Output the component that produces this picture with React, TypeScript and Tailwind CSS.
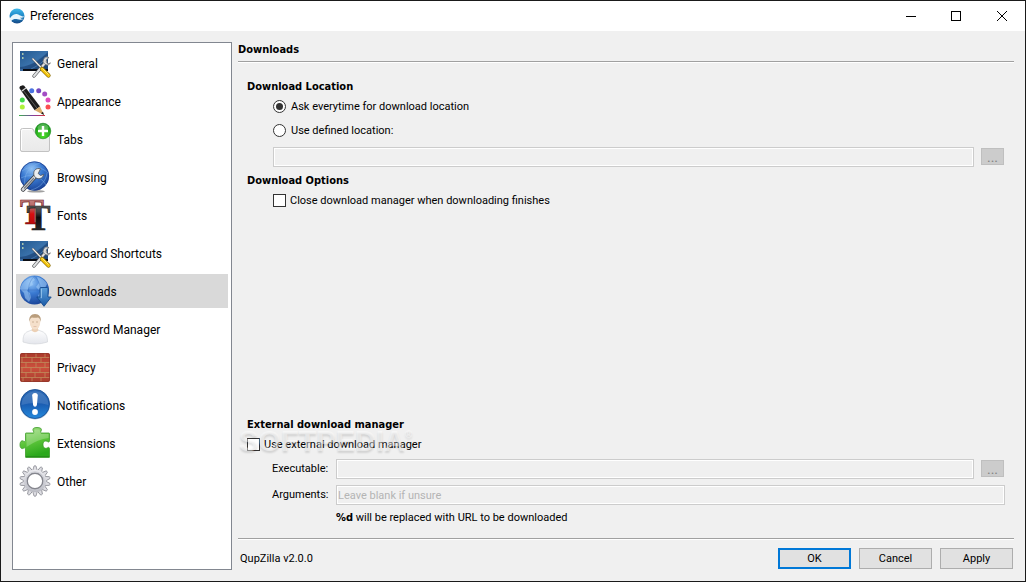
import { useState, type ReactNode } from 'react';

const uiFont = "font-['Roboto','Noto_Sans',sans-serif]";
const boldFont = "font-bold font-['DejaVu_Sans_Condensed','DejaVu_Sans',sans-serif]";

function Svg({ children }: { children: ReactNode }) {
  return (
    <svg viewBox="0 0 32 32" className="w-8 h-8 shrink-0 overflow-visible" fill="none" aria-hidden="true">
      {children}
    </svg>
  );
}

function DesktopIcon() {
  return (
    <Svg>
      <defs>
        <linearGradient id="desk" x1="0" y1="0" x2="1" y2="1">
          <stop offset="0" stopColor="#24598f" />
          <stop offset="0.5" stopColor="#3a72ab" />
          <stop offset="1" stopColor="#173a68" />
        </linearGradient>
      </defs>
      <rect x="1" y="4" width="28" height="20" fill="url(#desk)" />
      <path d="M1 20C12 19 21 13 29 5v17H1z" fill="#1c4577" opacity="0.7" />
      <path d="M12 22c7-3 13-8 17-13" stroke="#5d8fc0" strokeWidth="0.6" />
      <rect x="1" y="22" width="28" height="2" fill="#0a0d14" />
      <rect x="1" y="22" width="3" height="2" fill="#3c6ca0" />
      <path d="M3 7h1.5M3 11h1.5" stroke="#d5e8b4" strokeWidth="1.5" />
      {/* wrench */}
      <path d="M15 29 27 15" stroke="#55585c" strokeWidth="3.4" strokeLinecap="round" />
      <path d="M15 29 27 15" stroke="#dfe1e3" strokeWidth="2" strokeLinecap="round" />
      <path d="M30 10.5a4 4 0 1 0 1.5 5.5l-2.6.8-1.7-1.8.4-2.4z" fill="#d4d6d8" stroke="#606366" strokeWidth="0.7" />
      {/* screwdriver */}
      <path d="m13.500 11.500 10 10.500" stroke="#4c4e50" strokeWidth="2.4" />
      <path d="m13.500 11.500 10 10.500" stroke="#f2f2f2" strokeWidth="1.2" />
      <path d="m23 22 6.500 6.500" stroke="#8d6c00" strokeWidth="4.2" strokeLinecap="round" />
      <path d="m23 22 6.500 6.500" stroke="#f4c60d" strokeWidth="3" strokeLinecap="round" />
      <path d="m23.500 21.500 6 6" stroke="#fff0a0" strokeWidth="0.8" />
    </Svg>
  );
}

function AppearanceIcon() {
  return (
    <Svg>
      <defs>
        <linearGradient id="stroke-line" x1="0" x2="1">
          <stop offset="0" stopColor="#39b54a" />
          <stop offset="0.5" stopColor="#7a3fa5" />
          <stop offset="1" stopColor="#d8323c" />
        </linearGradient>
      </defs>
      <circle cx="12.7" cy="5.7" r="2.5" fill="#4a74e0" />
      <circle cx="19.7" cy="5.7" r="2.5" fill="#7448bf" />
      <circle cx="25.7" cy="9" r="2.5" fill="#a34cc4" />
      <circle cx="29" cy="15" r="2.5" fill="#e04cbc" />
      <circle cx="29" cy="22" r="2.5" fill="#fb4e50" />
      <circle cx="3.3" cy="15" r="2.5" fill="#42d94a" />
      <circle cx="3.3" cy="22" r="2.5" fill="#aef23c" />
      <rect x="0" y="30" width="26" height="1" fill="url(#stroke-line)" />
      <path d="M.3 3 1 1.200 3.800.2 5.200.7 21 21.500l-5.300 3.700z" fill="#1c1c1c" />
      <path d="M4 5 18 23.200" stroke="#5c5c5c" strokeWidth="1" />
      <path d="m2.800 6 4.200-3" stroke="#d6d6d6" strokeWidth="1.2" />
      <path d="m15.700 25.200 5.300-3.700 4 8.500z" fill="#d9ac69" />
      <path d="m22 28.200 2-1.400 1 3.200z" fill="#1b1b1b" />
    </Svg>
  );
}

function TabsIcon() {
  return (
    <Svg>
      <defs>
        <linearGradient id="tab" x1="0" y1="0" x2="0" y2="1">
          <stop offset="0" stopColor="#f3f3f3" />
          <stop offset="1" stopColor="#e9e9e9" />
        </linearGradient>
        <radialGradient id="plus" cx="0.5" cy="0.8" r="0.8">
          <stop offset="0" stopColor="#4fdc2c" />
          <stop offset="1" stopColor="#0d8f14" />
        </radialGradient>
      </defs>
      <path
        d="M1.500 27V7.500q0-2 2-2h9q1.500 0 2 1.500l.6 1.500q.4 1.500 2 1.500H29q1.500 0 1.500 1.500V27q0 1.500-1.500 1.500H3Q1.500 28.500 1.500 27z"
        fill="url(#tab)"
        stroke="#c2c2c2"
      />
      <path d="M2.500 27V8q0-1.500 1.500-1.500h8.500" stroke="#fff" />
      <circle cx="24" cy="8" r="7.8" fill="url(#plus)" stroke="#0d7f12" strokeWidth="0.5" />
      <ellipse cx="24" cy="4.5" rx="5.5" ry="3.5" fill="#fff" opacity="0.25" />
      <path d="M24 3v10M19 8h10" stroke="#fff" strokeWidth="2.4" />
    </Svg>
  );
}

function GlobeBase({ id }: { id: string }) {
  return (
    <>
      <defs>
        <radialGradient id={id} cx="0.4" cy="0.25" r="0.8">
          <stop offset="0" stopColor="#8fc1f5" />
          <stop offset="0.45" stopColor="#3b7bd2" />
          <stop offset="1" stopColor="#173f93" />
        </radialGradient>
      </defs>
      <circle cx="15.5" cy="15" r="14.5" fill={`url(#${id})`} />
    </>
  );
}

function BrowsingIcon() {
  return (
    <Svg>
      <ellipse cx="17" cy="30.3" rx="9" ry="1.2" fill="#777" opacity="0.7" />
      <GlobeBase id="globe-browse" />
      <circle cx="15.5" cy="15" r="14.2" stroke="#1d3f8f" strokeWidth="0.8" />
      <path
        d="M3 10c8-6 19-5 26 2M6 25C4 14 10 5 21 2M2 17c9-5 20-2 25 7M12 29c9-2 15-9 16-17"
        stroke="#83b6ed"
        strokeWidth="0.6"
        opacity="0.8"
      />
      <path d="M4 28.500 17 14.500" stroke="#34373b" strokeWidth="4.4" strokeLinecap="round" />
      <path d="M4 28.500 17 14.500" stroke="#cfd2d6" strokeWidth="3" strokeLinecap="round" />
      <path d="m5.500 27 9-9.500" stroke="#777b80" strokeWidth="1.2" strokeLinecap="round" />
      <path
        d="M21.500 7.800c-4-1.200-7.300 1.500-6.700 5.500.4 3 3.300 5 6.200 4.200 2-.5 3.400-2 3.700-4l-3.200 1-2.300-2z"
        fill="#eceef0"
        stroke="#4c5055"
        strokeWidth="0.8"
      />
    </Svg>
  );
}

function FontsIcon() {
  return (
    <Svg>
      <defs>
        <linearGradient id="red-t" x1="0" y1="0" x2="0" y2="1">
          <stop offset="0" stopColor="#c9a0a0" />
          <stop offset="0.4" stopColor="#b86060" />
          <stop offset="0.55" stopColor="#d80f0f" />
          <stop offset="1" stopColor="#a00808" />
        </linearGradient>
        <linearGradient id="black-t" x1="0" y1="0" x2="0" y2="1">
          <stop offset="0" stopColor="#777" />
          <stop offset="0.35" stopColor="#444" />
          <stop offset="0.5" stopColor="#0c0c0c" />
          <stop offset="1" stopColor="#3a3a3a" />
        </linearGradient>
      </defs>
      <g fontFamily="Liberation Serif, serif" fontWeight="700" fontSize="36" textAnchor="middle">
        <text x="13" y="25" fill="url(#red-t)" stroke="#6c1212" strokeWidth="0.6">T</text>
        <text x="19.5" y="30.5" fill="url(#black-t)" stroke="#1a1a1a" strokeWidth="0.6">T</text>
      </g>
    </Svg>
  );
}

function DownloadsIcon() {
  return (
    <Svg>
      <defs>
        <linearGradient id="arrow" x1="0" y1="0" x2="0" y2="1">
          <stop offset="0" stopColor="#5b9edb" />
          <stop offset="1" stopColor="#1a5ba6" />
        </linearGradient>
      </defs>
      <GlobeBase id="globe-down" />
      <path
        d="M3 9c3-4 7-6.500 11-7l2 3-3 2 1 3-4 2-2 4 3 2 1 5-2 4-4-4-1-5-4-4zM18 2c4 .5 8 3 10 7l-2 4-4-1-2 3-3-3 3-4zM21 17l4-1 3 2-2 5-5 3-2-5z"
        fill="#a9d2f8"
        opacity="0.55"
      />
      <path d="M1 15h29M15.500 1c-8 8-8 20 0 28M15.500 1c8 8 8 20 0 28" stroke="#1e55a6" strokeWidth="0.5" opacity="0.5" />
      <path
        d="M21 13.500q0-1 1-1h6q1 0 1 1V22h3.200L25 31.300 17.800 22H21z"
        fill="url(#arrow)"
        stroke="#134a8e"
        strokeWidth="0.9"
        strokeLinejoin="round"
      />
      <path d="M22.300 13.700v9.500" stroke="#b2d9f7" strokeWidth="0.8" />
    </Svg>
  );
}

function PersonIcon() {
  return (
    <Svg>
      <defs>
        <linearGradient id="shirt" x1="0" y1="0" x2="0" y2="1">
          <stop offset="0" stopColor="#fff" />
          <stop offset="1" stopColor="#e4e6ec" />
        </linearGradient>
      </defs>
      <path
        d="M4 29c0-6 1-9 5-10.500l4-1.500h6l4 1.500c4 1.500 5.500 5 5.500 10.500q-6 2-12.500 2T4 29z"
        fill="url(#shirt)"
        stroke="#d3d5da"
        strokeWidth="0.7"
      />
      <path d="M12.500 17.500q3.500 3.500 7 0L18.500 14h-5z" fill="#ecd0b5" />
      <ellipse cx="16" cy="9.5" rx="5.2" ry="7" fill="#f5e0cb" />
      <path d="M10.500 9C9.500 4 12 1 16 1s6.800 3 5.500 8q-.5-4-2.500-4.500-3 .5-6 0-2 .5-2.500 4.500z" fill="#b99d7c" />
      <path d="M13 9h2m2 0h2" stroke="#b39477" strokeWidth="0.6" />
      <path d="M14.500 13.500h3" stroke="#d3a58d" strokeWidth="0.5" />
    </Svg>
  );
}

function BrickIcon() {
  return (
    <Svg>
      <defs>
        <linearGradient id="bricks" x1="0" y1="0" x2="0" y2="1">
          <stop offset="0" stopColor="#a9392b" />
          <stop offset="0.5" stopColor="#cc503d" />
          <stop offset="1" stopColor="#a93d2e" />
        </linearGradient>
      </defs>
      <rect x="1" y="2" width="30" height="29" rx="2" fill="url(#bricks)" />
      <path
        d="M1 6.500h30M1 11.500h30M1 16.500h30M1 21.500h30M1 26.500h30M7 2v4.500M17 2v4.500M26 2v4.500M3 6.500v5M13 6.500v5M22 6.500v5M7 11.500v5M17 11.500v5M26 11.500v5M3 16.500v5M12 16.500v5M21 16.500v5M7 21.500v5M16 21.500v5M26 21.500v5M4 26.500V31M13 26.500V31M22 26.500V31"
        stroke="#c08c5c"
        strokeWidth="0.8"
      />
      <rect x="1.5" y="2.5" width="29" height="28" rx="2" stroke="#8e3529" opacity="0.7" />
    </Svg>
  );
}

function NoticeIcon() {
  return (
    <Svg>
      <defs>
        <linearGradient id="notice" x1="0" y1="0" x2="0" y2="1">
          <stop offset="0" stopColor="#2b69b5" />
          <stop offset="0.5" stopColor="#1a5db2" />
          <stop offset="1" stopColor="#2489dc" />
        </linearGradient>
      </defs>
      <circle cx="16" cy="15.5" r="15" fill="#a9bfd6" />
      <circle cx="16" cy="15" r="14.5" fill="url(#notice)" stroke="#164b91" strokeWidth="0.8" />
      <path d="M2.500 16a13.500 13.500 0 0 1 27 0q-13-4-27 0z" fill="#fff" opacity="0.13" />
      <path d="M13.200 6.500q0-2.500 2.800-2.500t2.800 2.500L17.900 16q-.3 1.800-1.900 1.800T14.100 16z" fill="#fff" />
      <circle cx="16" cy="23" r="2.9" fill="#fff" />
    </Svg>
  );
}

function PuzzleIcon() {
  return (
    <Svg>
      <defs>
        <linearGradient id="puzzle" x1="0" y1="0" x2="0.3" y2="1">
          <stop offset="0" stopColor="#a2dc83" />
          <stop offset="0.55" stopColor="#5cc43a" />
          <stop offset="1" stopColor="#2ba81c" />
        </linearGradient>
      </defs>
      <path
        d="M7 6h7c1 0 1-.8.400-1.800C13 1.500 15 .5 18 .5s5.500 1 4 3.700c-.6 1-.4 1.800.6 1.800H30q.5 0 .5.500v7.300c0 1.200-1 1.600-2 .8-2.500-1.500-4.500 0-4.500 3s2 4.700 4.500 3.200c1-.8 2-.4 2 .8V30q0 .5-.5.500H7q-.5 0-.5-.5v-8c0-1.200-1-1.400-2-.8-2 1.200-3.500-.5-3.500-3.400s1.500-4.800 3.500-3.600c1 .7 2 .3 2-.9V6.500Q6.500 6 7 6z"
        fill="url(#puzzle)"
        stroke="#3d9c2b"
        strokeWidth="0.8"
      />
      <path d="M7.500 7H15l.5-4.500h5L22 7h7.500v4Q19 12 7.500 20z" fill="#fff" opacity="0.23" />
      <path d="M7 29.500h23" stroke="#23831a" strokeWidth="1" opacity="0.7" />
    </Svg>
  );
}

function GearIcon() {
  const teeth = Array.from({ length: 14 }, (_, i) => (i * 360) / 14);
  return (
    <Svg>
      <defs>
        <linearGradient id="gear" x1="0" y1="0" x2="0" y2="1">
          <stop offset="0" stopColor="#ececf0" />
          <stop offset="1" stopColor="#b9bac2" />
        </linearGradient>
      </defs>
      {teeth.map((angle) => (
        <path
          key={angle}
          d="M13.500 6.500 15 1q1-.6 2 0l1.500 5.500z"
          fill="#dddde2"
          stroke="#8b8c94"
          strokeWidth="0.8"
          transform={`rotate(${angle} 16 16)`}
        />
      ))}
      <circle cx="16" cy="16" r="11.3" fill="url(#gear)" />
      <circle cx="16" cy="16" r="7.8" fill="#fff" stroke="#85868e" strokeWidth="1.4" />
      <circle cx="16" cy="16" r="9.2" stroke="#c5c6ce" strokeWidth="0.8" />
    </Svg>
  );
}

const sections = [
  { name: 'General', icon: <DesktopIcon /> },
  { name: 'Appearance', icon: <AppearanceIcon /> },
  { name: 'Tabs', icon: <TabsIcon /> },
  { name: 'Browsing', icon: <BrowsingIcon /> },
  { name: 'Fonts', icon: <FontsIcon /> },
  { name: 'Keyboard Shortcuts', icon: <DesktopIcon /> },
  { name: 'Downloads', icon: <DownloadsIcon /> },
  { name: 'Password Manager', icon: <PersonIcon /> },
  { name: 'Privacy', icon: <BrickIcon /> },
  { name: 'Notifications', icon: <NoticeIcon /> },
  { name: 'Extensions', icon: <PuzzleIcon /> },
  { name: 'Other', icon: <GearIcon /> },
];

const headingClass = `pt-px leading-[13px] ${boldFont}`;
const checkboxClass =
  'appearance-none w-[13px] h-[13px] shrink-0 border border-[#333] bg-white checked:bg-[#333]';
const radioClass =
  'appearance-none w-[13px] h-[13px] shrink-0 rounded-full border border-[#333] bg-white flex items-center justify-center checked:before:w-[7px] checked:before:h-[7px] checked:before:rounded-full checked:before:bg-[#333]';
const fieldClass =
  'h-5 min-w-0 flex-1 border border-[#ccc] bg-[#f0f0f0] px-px shadow-[inset_0_0_0_1px_#fff] placeholder:text-[#b4b4b4]';
const browseClass =
  'mt-px w-[23px] h-[17px] shrink-0 self-start border border-[#bfbfbf] bg-[#ccc] text-sm leading-3 text-[#838383]';
const buttonClass = 'w-[73px] h-[21px] bg-[#e1e1e1] leading-4';

function Divider() {
  return <div className="h-[2px] shrink-0 border-t border-b border-t-[#a0a0a0] border-b-white" />;
}

function TitleBar() {
  return (
    <header className="flex h-[30px] shrink-0 items-center bg-white pl-2">
      <svg viewBox="0 0 16 16" className="w-4 h-4" aria-hidden="true">
        <defs>
          <linearGradient id="logo" x1="0" y1="0" x2="0" y2="1">
            <stop offset="0" stopColor="#3fb9ea" />
            <stop offset="0.5" stopColor="#1e86c6" />
            <stop offset="1" stopColor="#174a86" />
          </linearGradient>
        </defs>
        <circle cx="8" cy="8" r="7.5" fill="url(#logo)" />
        <path d="M.7 10.500C3 7 6 5.700 8.500 6.200c2 .5 3 2.100 6.800 2.300-1.300 1.300-3 1.500-4.500 1.300 1 .8 2.300 1.200 3.700 1.200-2 1-4 .9-6 .3-2.200-.7-4.500-.2-6.300 1.700Q1 12 .7 10.500z" fill="#e9f6fc" />
      </svg>
      <h1 className={`ml-[5px] flex-1 text-xs ${uiFont}`}>Preferences</h1>
      <button aria-label="Minimize" className="flex h-full w-11 items-center justify-center">
        <svg viewBox="0 0 10 10" className="w-[10px] h-[10px]" stroke="#000"><path d="M0 5.500h10" /></svg>
      </button>
      <button aria-label="Maximize" className="flex h-full w-[46px] items-center justify-center">
        <svg viewBox="0 0 10 10" className="w-[10px] h-[10px]" stroke="#000" fill="none"><rect x="0.5" y="0.5" width="9" height="9" /></svg>
      </button>
      <button aria-label="Close" className="flex h-full w-[46px] items-center justify-center">
        <svg viewBox="0 0 10 10" className="w-[10px] h-[10px]" stroke="#000"><path d="m0 0 10 10M10 0 0 10" /></svg>
      </button>
    </header>
  );
}

export default function App() {
  const [active, setActive] = useState('Downloads');
  const [location, setLocation] = useState('ask');

  return (
    <div className={`flex min-h-screen flex-col border border-[#1a1a1a] bg-[#f0f0f0] text-black ${uiFont}`}>
      <TitleBar />

      <div className="flex flex-1 gap-1.5 p-[11px]">
        <nav className="flex w-[220px] shrink-0 flex-col gap-1 border border-[#828790] bg-white p-[3px] text-xs">
          {sections.map(({ name, icon }) => (
            <button
              key={name}
              onClick={() => setActive(name)}
              className={`flex h-[34px] items-center gap-1.5 px-[3px] text-left ${active === name ? 'bg-[#d9d9d9]' : ''}`}
            >
              {icon}
              <span className="pt-0.5">{name}</span>
            </button>
          ))}
        </nav>

        <main className="flex min-w-0 flex-1 flex-col text-[11px] leading-[14px]">
          <h2 className={`mb-[5px] ${headingClass}`}>Downloads</h2>
          <Divider />

          <div className="flex flex-1 flex-col pt-4 pr-[9px] pb-[13px] pl-[9px]">
            <section>
              <h3 className={headingClass}>Download Location</h3>
              <div className="mt-1.5 flex flex-col gap-[9px] pl-[26px]">
                <label className="flex h-[15px] items-center gap-[5px]">
                  <input type="radio" name="location" className={radioClass} checked={location === 'ask'} onChange={() => setLocation('ask')} />
                  Ask everytime for download location
                </label>
                <label className="flex h-[15px] items-center gap-[5px]">
                  <input type="radio" name="location" className={radioClass} checked={location === 'defined'} onChange={() => setLocation('defined')} />
                  Use defined location:
                </label>
                <div className="flex items-center gap-[7px] pr-px">
                  <input type="text" aria-label="Defined location" className={fieldClass} disabled={location === 'ask'} />
                  <button aria-label="Browse location" className={browseClass} disabled={location === 'ask'}>...</button>
                </div>
              </div>
            </section>

            <section className="mt-1.5">
              <h3 className={headingClass}>Download Options</h3>
              <label className="mt-1.5 flex h-[15px] items-center gap-1 pl-[26px]">
                <input type="checkbox" className={checkboxClass} />
                Close download manager when downloading finishes
              </label>
            </section>

            <section className="relative mt-auto">
              <h3 className={headingClass}>External download manager</h3>
              <label className="mt-1.5 flex h-[15px] items-center gap-1">
                <input type="checkbox" className={checkboxClass} />
                Use external download manager
              </label>
              <div className="mt-[7px] flex items-center pl-[25px]">
                <label htmlFor="executable" className="w-16 shrink-0">Executable:</label>
                <input id="executable" type="text" className={fieldClass} disabled />
                <button aria-label="Browse executable" className={`ml-[7px] mr-px ${browseClass}`} disabled>...</button>
              </div>
              <div className="mt-1.5 flex items-center pl-[25px]">
                <label htmlFor="arguments" className="w-16 shrink-0">Arguments:</label>
                <input id="arguments" type="text" placeholder="Leave blank if unsure" className={fieldClass} disabled />
              </div>
              <p className="mt-1.5 pl-[89px]">
                <b className={boldFont}>%d</b> will be replaced with URL to be downloaded
              </p>
              {/* watermark over the checkbox row */}
              <span
                aria-hidden="true"
                className="pointer-events-none absolute top-2 -left-2 flex items-start font-['Liberation_Sans',sans-serif] text-[29px] leading-8 font-bold text-white/45 [text-shadow:0_2px_2px_rgb(0_0_0/0.12)]"
              >
                SOFTPEDIA<span className="text-[10px] leading-5">®</span>
              </span>
            </section>
          </div>

          <Divider />
          <footer className="mt-2 mb-px flex items-center gap-2 pr-px pl-0.5">
            <span className="flex-1">QupZilla v2.0.0</span>
            <button className={`border-2 border-[#0078d7] ${buttonClass}`}>OK</button>
            <button className={`border border-[#adadad] ${buttonClass}`}>Cancel</button>
            <button className={`border border-[#adadad] ${buttonClass}`}>Apply</button>
          </footer>
        </main>
      </div>
    </div>
  );
}
